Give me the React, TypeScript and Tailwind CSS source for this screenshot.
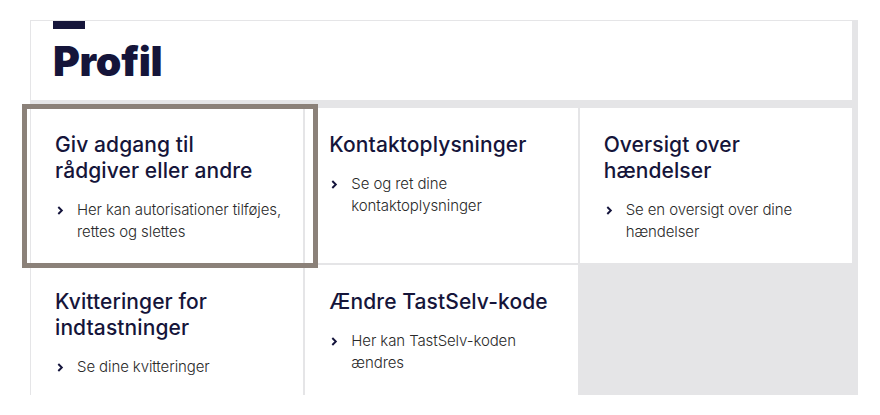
import React from 'react';

type Card = {
  title: string;
  text: string;
  focused?: boolean;
};

const cards: Card[] = [
  { title: 'Giv adgang til rådgiver eller andre', text: 'Her kan autorisationer tilføjes, rettes og slettes', focused: true },
  { title: 'Kontaktoplysninger', text: 'Se og ret dine kontaktoplysninger' },
  { title: 'Oversigt over hændelser', text: 'Se en oversigt over dine hændelser' },
  { title: 'Kvitteringer for indtastninger', text: 'Se dine kvitteringer' },
  { title: 'Ændre TastSelv-kode', text: 'Her kan TastSelv-koden ændres' },
];

const Chevron = () => (
  <svg viewBox="0 0 8 10" className="w-[7px] h-[9px] mt-[7px] shrink-0">
    <path d="M1.5 1 L5.5 5 L1.5 9" fill="none" stroke="#14143c" strokeWidth="2.2" />
  </svg>
);

const ProfileCard = ({ card }: { card: Card }) => (
  <div className="relative bg-white pl-6 pr-3 pt-6 pb-5">
    {card.focused && (
      <div className="absolute z-10 left-[-9px] top-[-4px] w-[296px] h-[164px] border-[5px] border-[#8b8179] pointer-events-none" />
    )}
    <h3 className="text-[21px] leading-[26px] font-medium text-[#15153a] tracking-[0.1px] max-w-[224px]">
      {card.title}
    </h3>
    <div className="flex gap-[13px] mt-[15px] pl-[2px]">
      <Chevron />
      <p className="text-[15px] leading-[22px] font-light text-[#2a2a2a] tracking-[-0.1px] max-w-[208px]">{card.text}</p>
    </div>
  </div>
);

export default function App() {
  return (
    <div className="min-h-[415px] bg-white pt-5 pl-[30px]" style={{ fontFamily: 'Inter, "Open Sans", sans-serif' }}>
      <div className="w-[828px] h-[375px] bg-[#e5e5e7] pt-px pl-px pr-[6px]">
        <div className="bg-white h-[79px] pl-[22px]">
          <div className="w-8 h-2 bg-[#15153a]" />
          <h1 className="text-[41px] leading-[48px] font-black text-[#15153a] mt-[8px] tracking-[-0.3px]">Profil</h1>
        </div>
        <div className="grid grid-cols-3 gap-[2px] mt-2">
          {cards.map((c) => (
            <ProfileCard key={c.title} card={c} />
          ))}
        </div>
      </div>
    </div>
  );
}
